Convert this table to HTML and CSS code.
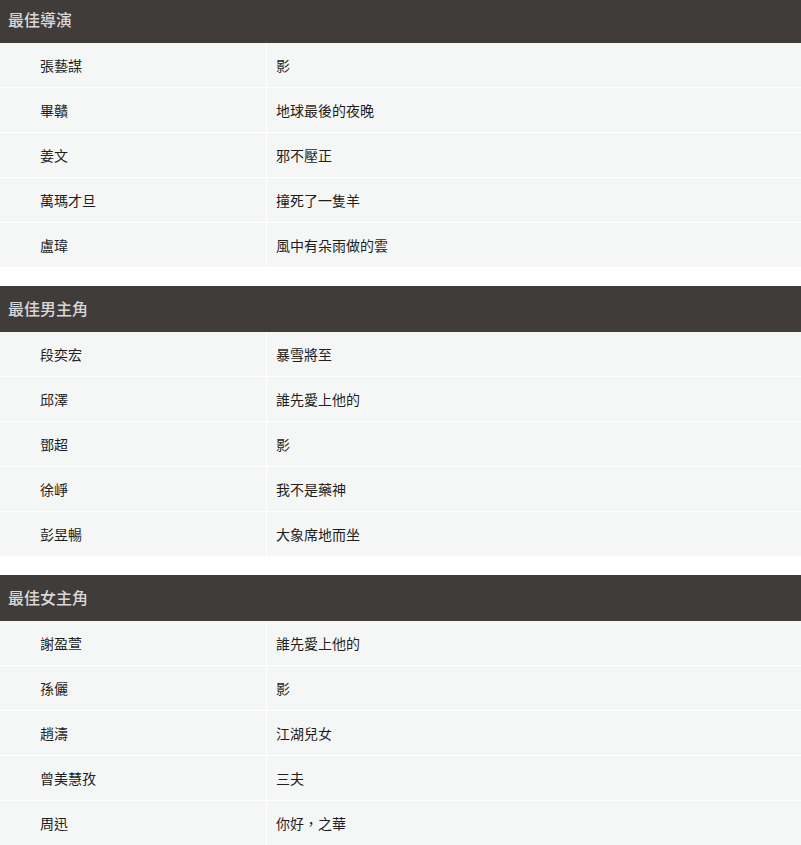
FILE: index.html
```html
<!DOCTYPE html>
<html lang="zh-Hant">
<head>
<meta charset="utf-8">
<link rel="stylesheet" href="styles.css">
</head>
<body>
<div class="page">
  <section class="award">
    <h2 class="award-title">最佳導演</h2>
    <div class="row"><div class="name">張藝謀</div><div class="work">影</div></div>
    <div class="row"><div class="name">畢贛</div><div class="work">地球最後的夜晚</div></div>
    <div class="row"><div class="name">姜文</div><div class="work">邪不壓正</div></div>
    <div class="row"><div class="name">萬瑪才旦</div><div class="work">撞死了一隻羊</div></div>
    <div class="row"><div class="name">盧瑋</div><div class="work">風中有朵雨做的雲</div></div>
  </section>
  <section class="award">
    <h2 class="award-title">最佳男主角</h2>
    <div class="row"><div class="name">段奕宏</div><div class="work">暴雪將至</div></div>
    <div class="row"><div class="name">邱澤</div><div class="work">誰先愛上他的</div></div>
    <div class="row"><div class="name">鄧超</div><div class="work">影</div></div>
    <div class="row"><div class="name">徐崢</div><div class="work">我不是藥神</div></div>
    <div class="row"><div class="name">彭昱暢</div><div class="work">大象席地而坐</div></div>
  </section>
  <section class="award">
    <h2 class="award-title">最佳女主角</h2>
    <div class="row"><div class="name">謝盈萱</div><div class="work">誰先愛上他的</div></div>
    <div class="row"><div class="name">孫儷</div><div class="work">影</div></div>
    <div class="row"><div class="name">趙濤</div><div class="work">江湖兒女</div></div>
    <div class="row"><div class="name">曾美慧孜</div><div class="work">三夫</div></div>
    <div class="row"><div class="name">周迅</div><div class="work">你好，之華</div></div>
  </section>
</div>
</body>
</html>
```
FILE: styles.css
```css
html, body {
  margin: 0;
  padding: 0;
  background: #ffffff;
}
body {
  font-family: "Noto Sans CJK TC", "Noto Sans", sans-serif;
  color: #1e1e1e;
  overflow: hidden;
}
.page {
  margin-top: -3px;
}
.award {
  margin-bottom: 19px;
}
.award-title {
  margin: 0;
  height: 46px;
  box-sizing: border-box;
  padding: 0 8px 3px;
  display: flex;
  align-items: center;
  background: #403c3a;
  color: #d8d8d8;
  font-size: 16px;
  font-weight: 500;
  line-height: 1;
}
.row {
  display: flex;
  height: 44px;
  margin-bottom: 1px;
  font-size: 14px;
  line-height: 1;
}
.name, .work {
  display: flex;
  align-items: center;
  background: #f5f7f6;
}
.name {
  width: 226px;
  padding-left: 40px;
  margin-right: 1px;
}
.work {
  flex: 1;
  padding-left: 9px;
}
```
